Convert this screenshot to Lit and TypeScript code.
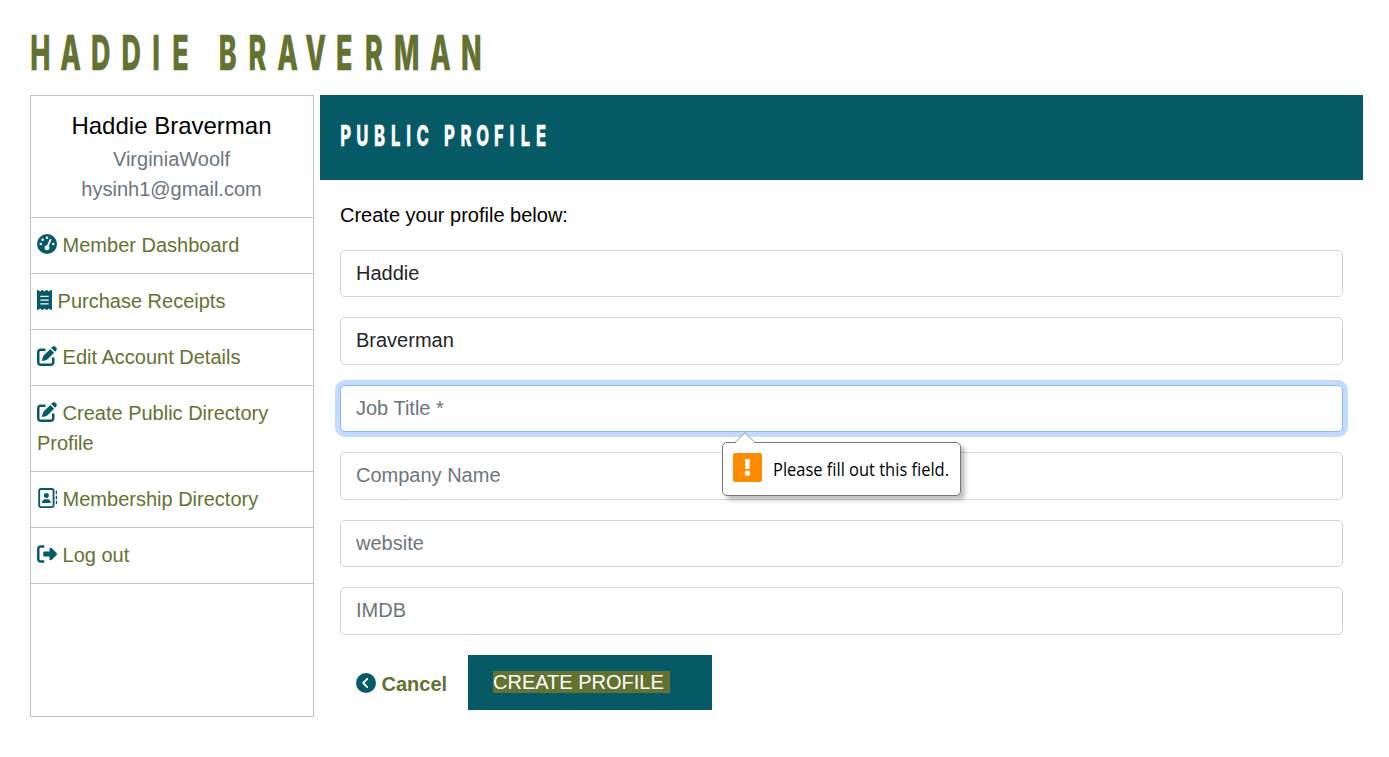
import { LitElement, html, css, svg } from "lit";
import { customElement } from "lit/decorators.js";

const ICONS: Record<string, { w: number; d: string }> = {
  gauge: { w: 512, d: "M0 256a256 256 0 1 1 512 0A256 256 0 1 1 0 256zM288 96a32 32 0 1 0 -64 0 32 32 0 1 0 64 0zM256 416c35.3 0 64-28.7 64-64c0-17.4-6.9-33.1-18.1-44.6L366 161.7c5.3-12.1-.2-26.3-12.3-31.6s-26.3 .2-31.6 12.3L257.9 288c-.6 0-1.3 0-1.9 0c-35.3 0-64 28.7-64 64s28.7 64 64 64zM176 144a32 32 0 1 0 -64 0 32 32 0 1 0 64 0zM96 288a32 32 0 1 0 0-64 32 32 0 1 0 0 64zm352-32a32 32 0 1 0 -64 0 32 32 0 1 0 64 0z" },
  receipt: { w: 384, d: "M14 2.2C22.5-1.7 32.5-.3 39.6 5.8L80 40.4 120.4 5.8c9-7.7 22.3-7.7 31.2 0L192 40.4 232.4 5.8c9-7.7 22.3-7.7 31.2 0L304 40.4 344.4 5.8c7.1-6.1 17.1-7.5 25.6-3.6s14 12.4 14 21.8V488c0 9.4-5.5 17.9-14 21.8s-18.5 2.5-25.6-3.6L304 471.6l-40.4 34.6c-9 7.7-22.3 7.7-31.2 0L192 471.6l-40.4 34.6c-9 7.7-22.3 7.7-31.2 0L80 471.6 39.6 506.2c-7.1 6.1-17.1 7.5-25.6 3.6S0 497.4 0 488V24C0 14.6 5.5 6.1 14 2.2zM96 144c-8.8 0-16 7.2-16 16s7.2 16 16 16H288c8.8 0 16-7.2 16-16s-7.2-16-16-16H96zM80 352c0 8.8 7.2 16 16 16H288c8.8 0 16-7.2 16-16s-7.2-16-16-16H96c-8.8 0-16 7.2-16 16zM96 240c-8.8 0-16 7.2-16 16s7.2 16 16 16H288c8.8 0 16-7.2 16-16s-7.2-16-16-16H96z" },
  edit: { w: 512, d: "M471.6 21.7c-21.9-21.9-57.3-21.9-79.2 0L362.3 51.7l97.9 97.9 30.1-30.1c21.9-21.9 21.9-57.3 0-79.2L471.6 21.7zm-299.2 220c-6.1 6.1-10.8 13.6-13.5 21.9l-29.6 88.8c-2.9 8.6-.6 18.1 5.8 24.6s15.9 8.7 24.6 5.8l88.8-29.6c8.2-2.7 15.7-7.4 21.9-13.5L437.7 172.3 339.7 74.3 172.4 241.7zM96 64C43 64 0 107 0 160V416c0 53 43 96 96 96H352c53 0 96-43 96-96V320c0-17.7-14.3-32-32-32s-32 14.3-32 32v96c0 17.7-14.3 32-32 32H96c-17.7 0-32-14.3-32-32V160c0-17.7 14.3-32 32-32h96c17.7 0 32-14.3 32-32s-14.3-32-32-32H96z" },
  book: { w: 512, d: "M384 48c8.8 0 16 7.2 16 16V448c0 8.8-7.2 16-16 16H96c-8.8 0-16-7.2-16-16V64c0-8.8 7.2-16 16-16H384zM96 0C60.7 0 32 28.7 32 64V448c0 35.3 28.7 64 64 64H384c35.3 0 64-28.7 64-64V64c0-35.3-28.7-64-64-64H96zM240 256a64 64 0 1 0 0-128 64 64 0 1 0 0 128zm-32 32c-44.2 0-80 35.8-80 80c0 8.8 7.2 16 16 16H336c8.8 0 16-7.2 16-16c0-44.2-35.8-80-80-80H208zM512 80c0-8.8-7.2-16-16-16s-16 7.2-16 16v64c0 8.8 7.2 16 16 16s16-7.2 16-16V80zM496 192c-8.8 0-16 7.2-16 16v64c0 8.8 7.2 16 16 16s16-7.2 16-16V208c0-8.8-7.2-16-16-16zm16 144c0-8.8-7.2-16-16-16s-16 7.2-16 16v64c0 8.8 7.2 16 16 16s16-7.2 16-16V336z" },
  logout: { w: 512, d: "M377.9 105.9L500.7 228.7c7.2 7.2 11.3 17.1 11.3 27.3s-4.1 20.1-11.3 27.3L377.9 406.1c-6.4 6.4-15 9.9-24 9.9c-18.7 0-33.9-15.2-33.9-33.9l0-62.1-128 0c-17.7 0-32-14.3-32-32l0-64c0-17.7 14.3-32 32-32l128 0 0-62.1c0-18.7 15.2-33.9 33.9-33.9c9 0 17.6 3.6 24 9.9zM160 96L96 96c-17.7 0-32 14.3-32 32l0 256c0 17.7 14.3 32 32 32l64 0c17.7 0 32 14.3 32 32s-14.3 32-32 32l-64 0c-53 0-96-43-96-96L0 128C0 75 43 32 96 32l64 0c17.7 0 32 14.3 32 32s-14.3 32-32 32z" },
  back: { w: 512, d: "M512 256A256 256 0 1 0 0 256a256 256 0 1 0 512 0zM271 135c9.4-9.4 24.6-9.4 33.9 0s9.4 24.6 0 33.9l-87 87 87 87c9.4 9.4 9.4 24.6 0 33.9s-24.6 9.4-33.9 0L167 273c-9.4-9.4-9.4-24.6 0-33.9L271 135z" },
};

const icon = (name: string) => {
  const { w, d } = ICONS[name];
  return html`<svg class="icon" width=${(w / 512) * 20} height="20" viewBox="0 0 ${w} 512"><path d=${d}></path></svg>`;
};

/* Condensed display lettering: each glyph is centred on its own x. */
const display = (text: string, centres: number[], baseline: number, squeeze: number) => svg`
  <text transform="scale(${squeeze} 1)" y=${baseline} text-anchor="middle"
    x=${centres.map((c) => (c / squeeze).toFixed(2)).join(" ")}>${text}</text>`;

const NAV = [
  ["gauge", "Member Dashboard"],
  ["receipt", "Purchase Receipts"],
  ["edit", "Edit Account Details"],
  ["edit", "Create Public Directory Profile"],
  ["book", "Membership Directory"],
  ["logout", "Log out"],
];

const FIELDS = [
  { value: "Haddie" },
  { value: "Braverman" },
  { hint: "Job Title *", active: true },
  { hint: "Company Name" },
  { hint: "website" },
  { hint: "IMDB" },
] as { value?: string; hint?: string; active?: boolean }[];

@customElement("app-root")
export class AppRoot extends LitElement {
  static styles = css`
    :host {
      display: block;
      box-sizing: border-box;
      height: 757px;
      padding: 20px 26px 0 30px;
      background: #fff;
      color: #000;
      font: 20px/30px "Liberation Sans", Arial, sans-serif;
    }
    * { box-sizing: border-box; }
    h1, h2, p { margin: 0; font-weight: inherit; }
    h1 { height: 75px; }
    .display { display: block; font-family: Inter, "Liberation Sans", sans-serif; font-weight: 800; overflow: visible; }
    .name { font-size: 48px; fill: #647231; stroke: #647231; stroke-width: 0.4px; }
    .heading { font-size: 28.7px; fill: #fff; stroke: #fff; stroke-width: 0.3px; }
    .columns { display: flex; gap: 6px; align-items: flex-start; }
    .side { width: 284px; height: 622px; border: 1px solid #c4c4c4; }
    .who { height: 122px; padding-top: 14px; text-align: center; color: #6c757d; border-bottom: 1px solid #c4c4c4; }
    .who .full { margin-bottom: 2px; font-size: 24px; color: #000; line-height: 32px; }
    .who p { margin-left: -1px; }
    .item { display: block; padding: 12px 6px 13px; color: #647231; border-bottom: 1px solid #c4c4c4; text-decoration: none; }
    .icon { fill: #055a66; vertical-align: -2px; }
    .main { flex: 1; }
    .bar { height: 85px; padding-left: 20px; background: #055a66; }
    .body { padding: 20px; }
    .fields { display: flex; flex-direction: column; gap: 20px; margin-top: 19.9px; }
    .field { position: relative; }
    .input {
      display: block; width: 100%; height: 47.5px; padding: 0 15px 0.6px;
      border: 1px solid #ced4da; border-radius: 5px; background: #fff;
      color: #212529; font: inherit; outline: none;
    }
    .input::placeholder { color: #6c757d; opacity: 1; }
    .active { border-color: #86b7fe; box-shadow: 0 0 0 5px #c2dbfe; }
    .tip {
      position: absolute; z-index: 2; left: 382px; top: 57px; width: 239px; height: 54px;
      display: flex; align-items: center; gap: 11px; padding: 0 10px 3px;
      border: 1px solid #767676; border-radius: 5px; background: #fff;
      box-shadow: 4px 4px 4px rgba(0, 0, 0, 0.25);
      font: 17.3px/24px "Open Sans", "Noto Sans", sans-serif; white-space: nowrap;
    }
    .arrow { position: absolute; left: 11px; top: -11px; }
    .tip-text { overflow: visible; }
    .actions { display: flex; margin-top: 20px; padding-left: 16px; }
    .cancel { width: 112px; padding-top: 14px; font-weight: 700; color: #647231; }
    .create { display: flex; width: 244px; height: 55px; padding: 16px 0 0 25px; align-items: flex-start; background: #055a66; color: #fff; border: 0; font: inherit; line-height: 22px; text-align: left; }
    .mark { display: block; width: 177px; height: 22px; background: #647231; white-space: nowrap; }
  `;

  render() {
    return html`
      <h1>
        <svg class="display name" width="460" height="75">
          ${display("HADDIEBRAVERMAN", [10.2, 40.5, 70.6, 101.1, 126, 150.4, 197.6, 227.4, 257.5, 285.5, 314.3, 343.9, 376.8, 410.3, 441.3], 50.2, 0.56)}
        </svg>
      </h1>
      <div class="columns">
        <nav class="side">
          <div class="who">
            <p class="full">Haddie Braverman</p>
            <p>VirginiaWoolf</p>
            <p>hysinh1@gmail.com</p>
          </div>
          ${NAV.map(([i, label]) => html`<a class="item">${icon(i)} ${label}</a>`)}
        </nav>
        <main class="main">
          <h2 class="bar">
            <svg class="display heading" width="220" height="85">
              ${display("PUBLICPROFILE", [5.7, 22.3, 39.6, 55.8, 68.7, 82.8, 109.4, 126, 142.8, 158.8, 171.8, 185.5, 201], 51.5, 0.58)}
            </svg>
          </h2>
          <div class="body">
            <p>Create your profile below:</p>
            <div class="fields">
              ${FIELDS.map((f) => html`
                <div class="field">
                  <input class="input ${f.active ? "active" : ""}" .value=${f.value ?? ""} placeholder=${f.hint ?? ""} />
                  ${f.active ? this.tip() : ""}
                </div>`)}
            </div>
            <div class="actions">
              <span class="cancel">${icon("back")} Cancel</span>
              <button class="create"><span class="mark">CREATE PROFILE</span></button>
            </div>
          </div>
        </main>
      </div>
    `;
  }

  private tip() {
    return html`
      <div class="tip">
        <svg class="arrow" width="22" height="12">
          <path d="M1 11.5 11 1.5 21 11.5V12H1z" fill="#fff"></path>
          <path d="M1 10.5 11 .7 21 10.5" fill="none" stroke="#999"></path>
        </svg>
        <svg width="29" height="29">
          <rect width="29" height="29" rx="2" fill="#ff8c00"></rect>
          <rect x="12.2" y="6" width="4.5" height="10" fill="#fff"></rect>
          <circle cx="14.4" cy="20.2" r="2.6" fill="#fff"></circle>
        </svg>
        <svg class="tip-text" width="177" height="24"><text x="0" y="21" textLength="176" lengthAdjust="spacingAndGlyphs">Please fill out this field.</text></svg>
      </div>`;
  }
}
